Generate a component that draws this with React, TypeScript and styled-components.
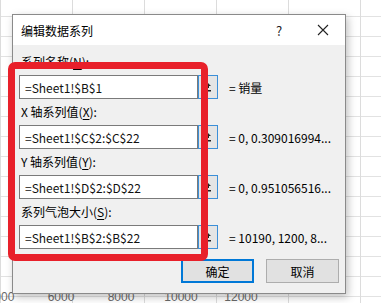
import React from 'react'
import styled, { createGlobalStyle } from 'styled-components'

const GlobalStyle = createGlobalStyle`
    html, body {
        margin: 0;
        padding: 0;
        background: #ffffff;
    }
    body {
        font-family: "Noto Sans CJK SC", "Noto Sans", sans-serif;
    }
`;

const Sheet = styled.div`
    position: relative;
    width: 381px;
    height: 303px;
    overflow: hidden;
    background-color: #ffffff;
    background-image:
        linear-gradient(to right, #dcdcdc 1px, transparent 1px),
        linear-gradient(to bottom, #e2e2e2 1px, transparent 1px);
    background-size: 72px 20px;
    background-position: 0 16px;
    display: flex;
    flex-direction: column;
    justify-content: flex-end;
`;

const AxisRow = styled.div`
    display: flex;
    margin-left: -29px;
    height: 12px;
    line-height: 12px;
    font-family: "Liberation Sans", sans-serif;
    font-size: 12px;
    color: #6a6a6a;
    span {
        width: 60px;
        text-align: center;
    }
`;

const Dialog = styled.div`
    position: absolute;
    left: 12px;
    top: 14px;
    width: 332px;
    height: 278px;
    background: #f0f0f0;
    border: 1px solid #8a8a8a;
    box-shadow: 2px 3px 8px rgba(0, 0, 0, 0.25);
    display: flex;
    flex-direction: column;
`;

const TitleBar = styled.div`
    height: 30px;
    background: #ffffff;
    display: flex;
    align-items: center;
    padding-left: 8px;
    font-size: 12px;
    color: #000;
`;

const Title = styled.div`
    flex: 1;
`;

const TitleButton = styled.div`
    width: 44px;
    height: 30px;
    display: flex;
    align-items: center;
    justify-content: center;
    font-size: 13px;
    color: #222;
`;

const Body = styled.div`
    position: relative;
    flex: 1;
    padding: 5px 0 0 6px;
    display: flex;
    flex-direction: column;
`;

const Field = styled.div`
    display: flex;
    flex-direction: column;
    height: 50px;
`;

const Label = styled.div`
    height: 20px;
    line-height: 23px;
    font-size: 12px;
    color: #000;
    padding-left: 2px;
    u {
        text-decoration: underline;
        text-underline-offset: 2px;
    }
`;

const InputRow = styled.div`
    display: flex;
    align-items: center;
    height: 24px;
    margin-top: 5px;
`;

const Input = styled.div`
    width: 172px;
    height: 22px;
    background: #ffffff;
    border: 1px solid #7a7a7a;
    display: flex;
    align-items: center;
    padding-left: 5px;
    font-size: 12px;
    color: #111;
`;

const RangeButton = styled.div`
    width: 18px;
    height: 22px;
    border: 1px solid #3c8fd8;
    background: #e5e5e5;
    display: flex;
    align-items: center;
    justify-content: center;
`;

const Preview = styled.div`
    margin-left: 11px;
    font-size: 12px;
    color: #000;
    white-space: nowrap;
`;

const Footer = styled.div`
    display: flex;
    justify-content: flex-end;
    gap: 12px;
    padding: 0 6px 0 0;
    margin-top: 9px;
`;

const Button = styled.div<{ $primary?: boolean }>`
    box-sizing: border-box;
    width: 73px;
    height: 24px;
    display: flex;
    align-items: center;
    justify-content: center;
    font-size: 12px;
    color: #000;
    background: #e1e1e1;
    border: ${p => p.$primary ? '2px solid #0078d7' : '1px solid #adadad'};
`;

const Highlight = styled.div`
    position: absolute;
    left: -5px;
    top: 17px;
    width: 186px;
    height: 185px;
    border: 7px solid #e8202a;
    border-radius: 7px;
    pointer-events: none;
`;

const CollapseIcon = () => (
    <svg width="10" height="12" viewBox="0 0 10 12">
        <path d="M5 2 L8 5 L6 5 L6 7 L4 7 L4 5 L2 5 Z" fill="#222" />
        <rect x="2" y="9" width="6" height="1.5" fill="#222" />
    </svg>
);

interface IField {
    label: React.ReactNode;
    value: string;
    preview: string;
}

const fields: IField[] = [
    { label: <>系列名称(<u>N</u>):</>, value: '=Sheet1!$B$1', preview: '= 销量' },
    { label: <>X 轴系列值(<u>X</u>):</>, value: '=Sheet1!$C$2:$C$22', preview: '= 0, 0.309016994...' },
    { label: <>Y 轴系列值(<u>Y</u>):</>, value: '=Sheet1!$D$2:$D$22', preview: '= 0, 0.951056516...' },
    { label: <>系列气泡大小(<u>S</u>):</>, value: '=Sheet1!$B$2:$B$22', preview: '= 10190, 1200, 8...' },
];

const App: React.FC = () => {
    return (
        <>
            <GlobalStyle />
            <Sheet>
                <AxisRow>
                    <span>4000</span>
                    <span>6000</span>
                    <span>8000</span>
                    <span>10000</span>
                    <span>12000</span>
                </AxisRow>
                <Dialog>
                    <TitleBar>
                        <Title>编辑数据系列</Title>
                        <TitleButton>?</TitleButton>
                        <TitleButton>
                            <svg width="12" height="12" viewBox="0 0 12 12">
                                <path d="M1 1 L11 11 M11 1 L1 11" stroke="#222" strokeWidth="1.1" />
                            </svg>
                        </TitleButton>
                    </TitleBar>
                    <Body>
                        {fields.map((f, i) => (
                            <Field key={i}>
                                <Label>{f.label}</Label>
                                <InputRow>
                                    <Input>{f.value}</Input>
                                    <RangeButton><CollapseIcon /></RangeButton>
                                    <Preview>{f.preview}</Preview>
                                </InputRow>
                            </Field>
                        ))}
                        <Footer>
                            <Button $primary>确定</Button>
                            <Button>取消</Button>
                        </Footer>
                        <Highlight />
                    </Body>
                </Dialog>
            </Sheet>
        </>
    )
}

export default App;
